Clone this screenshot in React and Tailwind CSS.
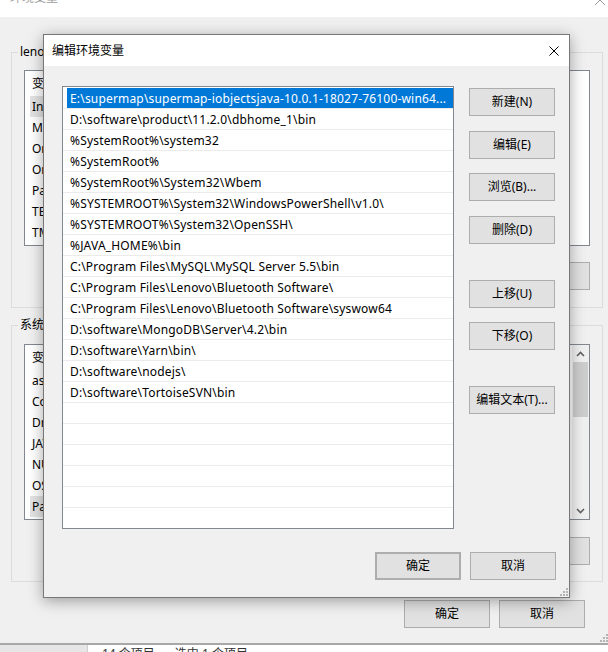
import React from "react";

const FONT = "[font-family:'Noto_Sans','Noto_Sans_CJK_SC',sans-serif]";

function Btn({ children, className = "" }) {
  return (
    <div
      className={`h-[28px] w-[86px] shrink-0 flex items-center justify-center bg-[#e1e1e1] border border-[#adadad] text-[12px] text-black ${className}`}
    >
      {children}
    </div>
  );
}

function Chevron({ up }) {
  return (
    <svg width="9" height="6" viewBox="0 0 9 6">
      <polyline
        points={up ? "1,5 4.5,1.5 8,5" : "1,1 4.5,4.5 8,1"}
        fill="none"
        stroke="#606060"
        strokeWidth="1.6"
      />
    </svg>
  );
}

const userVars = ["IntelliJ IDEA", "MOZ_PLUGIN_PATH", "OneDrive", "OneDriveConsumer", "Path", "TEMP", "TMP"];
const sysVars = ["asl.log", "ComSpec", "DriverData", "JAVA_HOME", "NUMBER_OF_PROCESSORS", "OS", "Path"];

const paths = [
  "E:\\supermap\\supermap-iobjectsjava-10.0.1-18027-76100-win64...",
  "D:\\software\\product\\11.2.0\\dbhome_1\\bin",
  "%SystemRoot%\\system32",
  "%SystemRoot%",
  "%SystemRoot%\\System32\\Wbem",
  "%SYSTEMROOT%\\System32\\WindowsPowerShell\\v1.0\\",
  "%SYSTEMROOT%\\System32\\OpenSSH\\",
  "%JAVA_HOME%\\bin",
  "C:\\Program Files\\MySQL\\MySQL Server 5.5\\bin",
  "C:\\Program Files\\Lenovo\\Bluetooth Software\\",
  "C:\\Program Files\\Lenovo\\Bluetooth Software\\syswow64",
  "D:\\software\\MongoDB\\Server\\4.2\\bin",
  "D:\\software\\Yarn\\bin\\",
  "D:\\software\\nodejs\\",
  "D:\\software\\TortoiseSVN\\bin",
];

function VarList({ items, selected, height, scroll }) {
  return (
    <div className={`bg-white border border-[#828790] flex ${height}`}>
      <div className="flex-1 flex flex-col overflow-hidden">
        <div className="h-[25px] shrink-0 pl-[7px] flex items-center text-[12px] text-black">变量</div>
        {items.map((v, i) => (
          <div key={i} className="h-[21px] shrink-0 pl-[5px] flex">
            <div
              className={`w-[160px] pl-[2px] flex items-center text-[12px] text-black ${i === selected ? "bg-[#e3e3e3]" : ""}`}
            >
              {v}
            </div>
          </div>
        ))}
      </div>
      {scroll && (
        <div className="w-[17px] bg-[#f0f0f0] flex flex-col">
          <div className="h-[17px] flex items-center justify-center">
            <Chevron up />
          </div>
          <div className="h-[55px] mx-[1px] bg-[#cdcdcd]" />
          <div className="flex-1" />
          <div className="h-[17px] flex items-center justify-center">
            <Chevron />
          </div>
        </div>
      )}
    </div>
  );
}

function Grip() {
  const dots = [
    [7, 1],
    [7, 4],
    [4, 4],
    [7, 7],
    [4, 7],
    [1, 7],
  ];
  return (
    <svg width="9" height="9" viewBox="0 0 9 9">
      {dots.map(([x, y], i) => (
        <rect key={i} x={x} y={y} width="2" height="2" fill="#b4b4b4" />
      ))}
    </svg>
  );
}

export default function App() {
  return (
    <div className={`relative w-[608px] h-[652px] overflow-hidden bg-[#f0f0f0] ${FONT}`}>
      {/* Background window: 环境变量 */}
      <div className="h-[643px] flex flex-col relative">
        <div className="h-[17px] bg-white flex justify-between overflow-hidden shrink-0">
          <span className="ml-[10px] -mt-[10px] text-[12px] leading-[16px] text-[#9b9b9b]">环境变量</span>
          <svg className="mr-[2px] -mt-[6px]" width="12" height="12" viewBox="0 0 12 12">
            <path d="M1 1 L11 11 M11 1 L1 11" stroke="#9b9b9b" strokeWidth="1" />
          </svg>
        </div>
        <div className="pl-[11px] pr-[5px] pt-[35px] flex flex-col">
          {/* user vars group */}
          <div className="relative border border-[#dcdcdc] h-[256px] px-[12px] pt-[17px]">
            <span className="absolute -top-[9px] left-[6px] px-[2px] bg-[#f0f0f0] text-[12px] text-black leading-[16px]">
              lenovo 的用户变量(U)
            </span>
            <VarList items={userVars} selected={0} height="h-[176px]" />
            <div className="mt-[16px] flex justify-end gap-[10px]">
              <Btn>新建(N)...</Btn>
              <Btn>编辑(E)...</Btn>
              <Btn>删除(D)</Btn>
            </div>
          </div>
          {/* system vars group */}
          <div className="relative mt-[17px] border border-[#dcdcdc] h-[257px] px-[12px] pt-[18px]">
            <span className="absolute -top-[9px] left-[6px] px-[2px] bg-[#f0f0f0] text-[12px] text-black leading-[16px]">
              系统变量(S)
            </span>
            <VarList items={sysVars} selected={6} height="h-[176px]" scroll />
            <div className="mt-[17px] flex justify-end gap-[10px]">
              <Btn>新建(W)...</Btn>
              <Btn>编辑(I)...</Btn>
              <Btn>删除(L)</Btn>
            </div>
          </div>
          <div className="mt-[18px] ml-[393px] flex gap-[9px]">
            <Btn>确定</Btn>
            <Btn className="w-[85px]">取消</Btn>
          </div>
        </div>
        <div className="absolute right-0 bottom-[1px]">
          <Grip />
        </div>
      </div>
      {/* status bar of window behind */}
      <div className="h-[9px] flex border-t-2 border-[#a8a8a8]">
        <div className="w-[88px] bg-[#e6e6e6] border-r border-[#cfcfcf]" />
        <div className="flex-1 bg-white pl-[14px] overflow-hidden flex gap-[20px]">
          <span className="text-[12px] leading-[16px] text-[#333] mt-[1px]">14 个项目</span>
          <span className="text-[12px] leading-[16px] text-[#333] mt-[1px]">选中 1 个项目</span>
        </div>
      </div>

      {/* Foreground dialog: 编辑环境变量 */}
      <div className="absolute left-[43px] top-[34px] w-[527px] h-[564px] border border-[#777777] bg-[#f0f0f0] shadow-[0_3px_14px_rgba(0,0,0,0.35)] flex flex-col">
        <div className="h-[31px] bg-white flex items-center justify-between shrink-0">
          <span className="pl-[8px] text-[12px] text-black">编辑环境变量</span>
          <svg className="mr-[10px]" width="10" height="10" viewBox="0 0 10 10">
            <path d="M0.5 0.5 L9.5 9.5 M9.5 0.5 L0.5 9.5" stroke="#000" strokeWidth="1" />
          </svg>
        </div>
        <div className="flex-1 flex flex-col pl-[18px] pr-[13px]">
          <div className="flex">
            <div className="mt-[20px] w-[392px] h-[443px] bg-white border border-[#828790] pt-[1px] overflow-hidden">
              {Array.from({ length: 22 }).map((_, i) => (
                <div key={i} className="h-[21px] border-b border-[#ebebeb] pl-[4px] flex">
                  <div
                    className={`flex-1 h-[20px] pl-[3px] pt-[2px] text-[12px] leading-[18px] tracking-[0.18px] whitespace-nowrap ${i === 0 ? "bg-[#0078d7] text-white" : "text-black"}`}
                  >
                    {paths[i] || ""}
                  </div>
                </div>
              ))}
            </div>
            <div className="ml-[15px] flex flex-col">
              <Btn className="mt-[22px]">新建(N)</Btn>
              <Btn className="mt-[15px]">编辑(E)</Btn>
              <Btn className="mt-[14px]">浏览(B)...</Btn>
              <Btn className="mt-[15px]">删除(D)</Btn>
              <Btn className="mt-[36px]">上移(U)</Btn>
              <Btn className="mt-[14px]">下移(O)</Btn>
              <Btn className="mt-[36px]">编辑文本(T)...</Btn>
            </div>
          </div>
          <div className="mt-[23px] flex justify-end gap-[9px]">
            <Btn className="border-2 border-[#0078d7]">确定</Btn>
            <Btn>取消</Btn>
          </div>
        </div>
        <div className="absolute right-[1px] bottom-[1px]">
          <Grip />
        </div>
      </div>
    </div>
  );
}
